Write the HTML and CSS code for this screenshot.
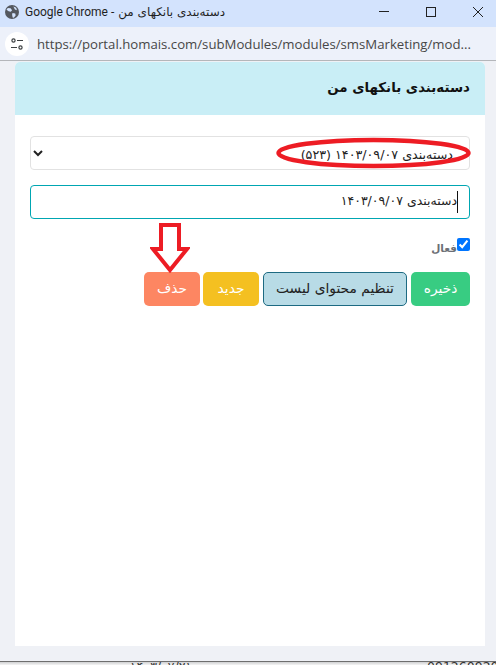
FILE: index.html
```html
<!DOCTYPE html>
<html lang="fa">
<head>
  <meta charset="UTF-8">
  <meta name="viewport" content="width=device-width, initial-scale=1.0">
  <title>دسته‌بندی بانکهای من</title>
  <link rel="stylesheet" href="styles.css">
</head>
<body>
  <div class="title-bar">
    <svg class="globe" width="14" height="14" viewBox="0 0 15 15">
      <circle cx="7.5" cy="7.5" r="7.5" fill="#54585f"/>
      <path d="M3 3.2l3 .3 1.6 2-1.4 1.6-2.3-.4L1.600 5zM8 8.500l3 .6.4 2.200-2 2.400-1.200-.3-.6-3zM9 1.500l3 1.400.8 2.600-2.200-.6z" fill="#d3e3fd"/>
    </svg>
    <span class="title-text" dir="ltr">Google Chrome - <span class="title-fa" dir="rtl">دسته‌بندی بانکهای من</span></span>
    <div class="window-controls">
      <svg width="10" height="10" viewBox="0 0 10 10"><path d="M0 4.500h10" stroke="#222" fill="none"/></svg>
      <svg width="10" height="10" viewBox="0 0 10 10"><rect x=".5" y=".5" width="9" height="9" stroke="#222" fill="none"/></svg>
      <svg width="10" height="10" viewBox="0 0 10 10"><path d="M0 0l10 10M10 0L0 10" stroke="#222" fill="none"/></svg>
    </div>
  </div>

  <div class="url-bar">
    <div class="site-info">
      <svg width="14" height="14" viewBox="0 0 14 14" fill="none" stroke="#3c4043" stroke-width="1.200">
        <circle cx="3.500" cy="3.500" r="1.600"/>
        <path d="M7 3.500h6M1 10.500h6"/>
        <circle cx="10.500" cy="10.500" r="1.600"/>
      </svg>
    </div>
    <span class="url-text">https://portal.homais.com/subModules/modules/smsMarketing/mod...</span>
  </div>

  <div class="page">
    <div class="card" dir="rtl">
      <div class="card-header">
        <h2>دسته‌بندی بانکهای من</h2>
      </div>
      <form class="card-body">
        <select class="field field-select">
          <option>دسته‌بندی ۱۴۰۳/۰۹/۰۷ (۵۲۳)</option>
        </select>
        <div class="field field-input">دسته‌بندی ۱۴۰۳/۰۹/۰۷<span class="caret"></span></div>
        <label class="active-check">
          <input type="checkbox" checked>
          <span>فعال</span>
        </label>
        <div class="actions">
          <button type="button" class="btn btn-save">ذخیره</button>
          <button type="button" class="btn btn-list">تنظیم محتوای لیست</button>
          <button type="button" class="btn btn-new">جدید</button>
          <button type="button" class="btn btn-delete">حذف</button>
        </div>
      </form>
    </div>
  </div>

  <div class="under-window">
    <span class="under-name" dir="rtl">دسته‌بندی ۱۴۰۳/۰۷/۲۱</span>
    <span class="under-phone">09126092086</span>
  </div>

  <!-- red marks drawn over the screenshot -->
  <svg class="mark-ellipse" width="198" height="34" viewBox="0 0 198 34">
    <ellipse cx="97.500" cy="17" rx="95" ry="13" fill="none" stroke="#ed1c24" stroke-width="4.500"/>
  </svg>
  <svg class="mark-arrow" width="40" height="52" viewBox="0 0 40 52">
    <path d="M11 2h18v24h8L20 47 3 26h8z" fill="#fff" stroke="#ed1c24" stroke-width="4"/>
  </svg>
</body>
</html>
```

FILE: styles.css
```css
* {
  box-sizing: border-box;
}
html,
body {
  height: 100%;
}
body {
  margin: 0;
  position: relative;
  display: flex;
  flex-direction: column;
  overflow: hidden;
  background-color: #eff1f6;
  font-family: 'DejaVu Sans', 'Liberation Sans', sans-serif;
}
.title-bar {
  height: 27px;
  display: flex;
  align-items: center;
  padding: 0 0 3px 5px;
  background-color: #d3e3fd;
}
.title-text {
  margin-left: 6px;
  font-family: Roboto, 'DejaVu Sans', sans-serif;
  font-size: 12px;
  color: #1f1f1f;
  white-space: nowrap;
}
.title-fa {
  margin-left: 1px;
  font-family: 'DejaVu Sans', sans-serif;
}
.window-controls {
  margin-left: auto;
  display: flex;
  gap: 37px;
  padding-right: 13px;
}
.url-bar {
  height: 34px;
  display: flex;
  align-items: center;
  padding-left: 5px;
  background-color: #edf1fa;
  border-bottom: 1px solid #b4b6ba;
}
.site-info {
  width: 24px;
  height: 24px;
  border-radius: 50%;
  display: flex;
  align-items: center;
  justify-content: center;
  background-color: #fff;
}
.url-text {
  margin-left: 8px;
  font-family: 'Open Sans', sans-serif;
  font-size: 13.2px;
  color: #474747;
  white-space: nowrap;
}
.page {
  flex: 1;
  min-height: 0;
  padding: 1px 11px 15px 15px;
}
.card {
  height: 100%;
  background-color: #fff;
  border-radius: 5px 5px 0 0;
  overflow: hidden;
}
.card-header {
  height: 53px;
  display: flex;
  align-items: center;
  padding: 0 15px 2px;
  background-color: #c9eef6;
}
.card-header h2 {
  margin: 0;
  font-size: 13.4px;
  font-weight: 700;
  color: #111;
}
.card-body {
  padding: 21px 15px;
}
.field {
  display: block;
  width: 100%;
  height: 34px;
  background-color: #fff;
  border-radius: 4px;
  font-family: inherit;
  font-size: 12.5px;
  color: #222;
}
.field-select {
  margin-bottom: 15px;
  padding: 2px 12px 0 0;
  border: 1px solid #e2e2e2;
  font-size: 12.7px;
}
.field-input {
  display: flex;
  align-items: center;
  padding: 0 12px 3px;
  border: 1px solid #00a6b2;
}
.caret {
  width: 1px;
  height: 22px;
  margin: 3px -1px 0 0;
  background-color: #111;
  order: -1;
}
.active-check {
  margin-top: 19px;
  height: 14px;
  display: flex;
  align-items: flex-start;
  font-size: 10.500px;
  font-weight: 700;
  color: #6b6f76;
}
.active-check input {
  width: 13px;
  height: 13px;
  margin: 0;
}
.active-check span {
  margin-top: 4px;
}
.actions {
  margin-top: 20px;
  display: flex;
  gap: 4px;
}
.btn {
  height: 34px;
  border: 1px solid transparent;
  border-radius: 5px;
  padding: 0 0 3px;
  font-family: inherit;
  font-size: 13.8px;
  color: #fff;
}
.btn-save {
  width: 59px;
  background-color: #38cc82;
}
.btn-list {
  width: 144px;
  color: #222;
  background-color: #b8dbe6;
  border-color: #1d6a82;
}
.btn-new {
  width: 56px;
  background-color: #f4c021;
}
.btn-delete {
  width: 56px;
  margin-right: -1px;
  background-color: #fd8662;
}
.under-window {
  height: 4px;
  display: flex;
  border-top: 1px solid #6e6e6e;
  background: linear-gradient(#cfd0d2, #f4f4f4);
  font-size: 12.5px;
  line-height: 10px;
  color: #333;
  white-space: nowrap;
  overflow: hidden;
}
.under-name {
  margin-left: 130px;
}
.under-phone {
  margin-left: auto;
  width: 69px;
  overflow: hidden;
}
.mark-ellipse {
  position: absolute;
  left: 276px;
  top: 136px;
}
.mark-arrow {
  position: absolute;
  left: 150px;
  top: 223px;
}
```
